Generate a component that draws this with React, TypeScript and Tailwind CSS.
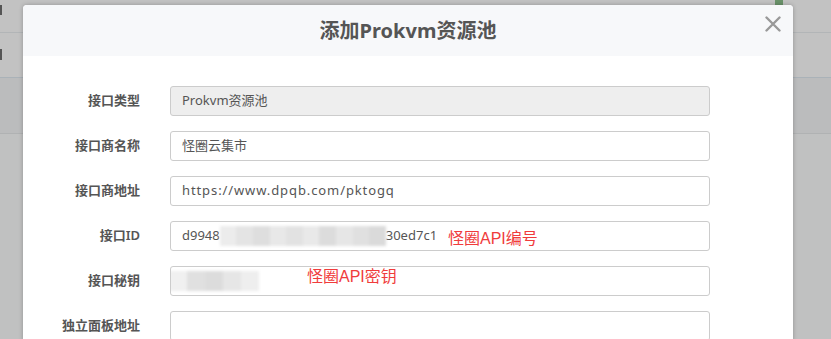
import React from "react";

const rows = [
  { label: "接口类型", value: "Prokvm资源池", disabled: true },
  { label: "接口商名称", value: "怪圈云集市" },
  { label: "接口商地址", value: "url" },
  { label: "接口ID", value: "id" },
  { label: "接口秘钥", value: "secret" },
  { label: "独立面板地址", value: "" },
];

function Smudge({ w, shades }: { w: number; shades: string[] }) {
  return (
    <span className="inline-flex h-[20px] items-stretch blur-[1.5px]" style={{ width: w }}>
      {shades.map((c, i) => (
        <span key={i} className="flex-1" style={{ background: c }} />
      ))}
    </span>
  );
}

function Value({ v }: { v: string }) {
  if (v === "url") {
    return <span className="tracking-[0.9px]">https://www.dpqb.com/pktogq</span>;
  }
  if (v === "id") {
    return (
      <span className="flex items-center">
        <span>d9948</span>
        <Smudge
          w={166}
          shades={["#ececec", "#e4e4e4", "#dedede", "#e8e8e8", "#e2e2e2", "#e9e9e9", "#dcdcdc", "#e6e6e6", "#e0e0e0", "#dadada"]}
        />
        <span>30ed7c1</span>
      </span>
    );
  }
  if (v === "secret") {
    return (
      <span className="-ml-[13px] flex items-center">
        <Smudge w={90} shades={["#f0f0f0", "#e0e0e0", "#dcdcdc", "#e6e6e6", "#eeeeee"]} />
      </span>
    );
  }
  return <span>{v}</span>;
}

export default function App() {
  return (
    <div className="relative h-[339px] w-[831px] overflow-hidden bg-[#c0c1c1] font-['Noto_Sans','Noto_Sans_CJK_SC',sans-serif]">
      {/* page behind the overlay */}
      <div className="flex flex-col">
        <div className="relative h-[33px] border-b border-[#b2b5b7] bg-[#c2c2c2]">
          <div className="absolute left-0 top-[5px] h-[10px] w-[2px] bg-[#555]" />
        </div>
        <div className="relative h-[45px] border-b border-[#aab2b8] bg-[#c2c2c2]">
          <div className="absolute left-0 top-[16px] h-[11px] w-[2px] bg-[#555]" />
        </div>
        <div className="h-[56px] border-b border-[#b0b2b3] bg-[#bbbcbd]" />
      </div>
      <div className="absolute right-[48px] top-0 h-[5px] w-[8px] bg-[#6a926a]" />

      {/* modal */}
      <div className="absolute left-[23px] top-[5px] w-[770px] rounded-t-[4px] bg-white shadow-[0_0_4px_rgba(0,0,0,0.25)]">
        <div className="relative flex h-[51px] items-center justify-center rounded-t-[4px] bg-[#f7f8fa]">
          <span className="text-[20px] font-bold text-[#555]">添加Prokvm资源池</span>
          <svg className="absolute right-[12px] top-[11px]" width="16" height="16" viewBox="0 0 16 16">
            <path d="M1.5 1.5 L14.5 14.5 M14.5 1.5 L1.5 14.5" stroke="#999" strokeWidth="2.4" strokeLinecap="round" />
          </svg>
        </div>
        <div className="flex flex-col gap-[15px] pt-[30px]">
          {rows.map((r) => (
            <div key={r.label} className="flex items-center">
              <label className="w-[147px] pr-[30px] text-right text-[13px] font-semibold text-[#555]">
                {r.label}
              </label>
              <div
                className={
                  "flex h-[30px] w-[540px] items-center overflow-hidden rounded-[3px] border border-[#ccc] px-[11px] text-[13px] text-[#555] " +
                  (r.disabled ? "bg-[#eee]" : "bg-white")
                }
              >
                <Value v={r.value} />
              </div>
            </div>
          ))}
        </div>
      </div>

      {/* red annotations */}
      <span className="absolute left-[448px] top-[227px] text-[16px] text-[#f03c3c] font-['Liberation_Sans','Noto_Sans_CJK_SC',sans-serif]">
        怪圈API编号
      </span>
      <span className="absolute left-[307px] top-[265px] text-[16px] text-[#f03c3c] font-['Liberation_Sans','Noto_Sans_CJK_SC',sans-serif]">
        怪圈API密钥
      </span>
    </div>
  );
}
